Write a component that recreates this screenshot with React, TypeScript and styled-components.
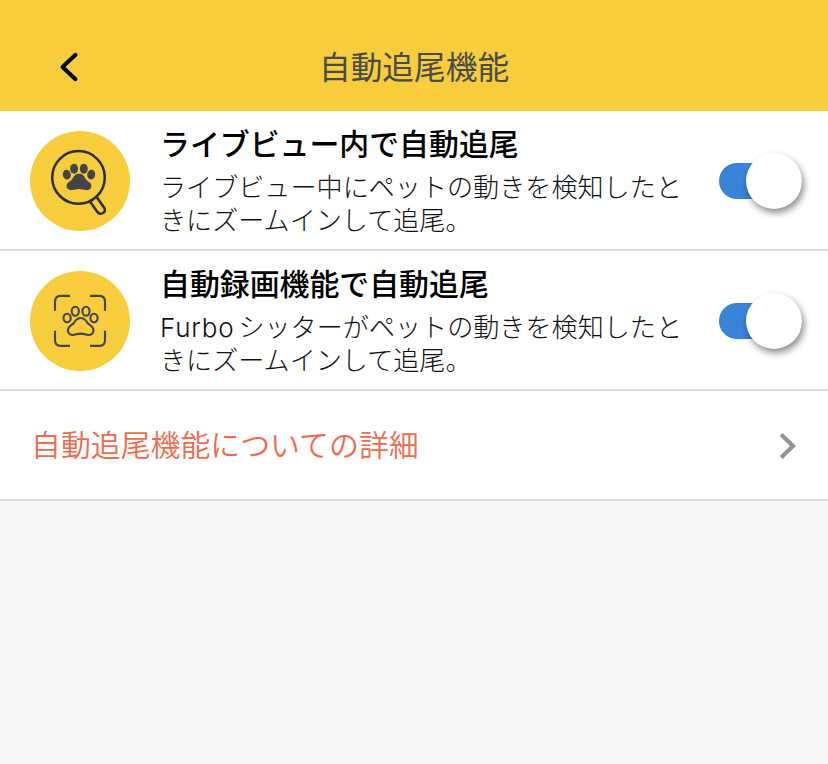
import React, { useState } from 'react';
import styled, { createGlobalStyle } from 'styled-components';

const GlobalStyle = createGlobalStyle`
  *, *::before, *::after { box-sizing: border-box; }
  body {
    margin: 0;
    background: #f6f6f6;
    font-family: "Noto Sans CJK JP", "Noto Sans", sans-serif;
  }
`;

const Screen = styled.div`
  width: 828px;
  height: 764px;
  overflow: hidden;
  background: #f6f6f6;
`;

const Header = styled.header`
  display: grid;
  grid-template-columns: 138px 1fr 138px;
  align-items: start;
  height: 111px;
  padding-top: 41px;
  background: #f7cd3d;
`;

const BackButton = styled.button`
  display: flex;
  width: 24px;
  height: 34px;
  margin: 9px 0 0 57px;
  padding: 0;
  border: 0;
  background: none;
`;

const HeaderTitle = styled.h1`
  margin: 0;
  color: #4a4a4a;
  font-size: 31.7px;
  font-weight: 400;
  line-height: 48px;
  text-align: center;
  white-space: nowrap;
`;

const SettingRow = styled.section`
  display: flex;
  height: 140px;
  padding: 0 26px 0 30px;
  border-bottom: 2px solid #dedede;
  background: #fff;
`;

const IconBadge = styled.div`
  flex: none;
  width: 100px;
  height: 100px;
  margin-top: 20px;
  border-radius: 50%;
  background: #f7cd3d;
`;

const SettingText = styled.div`
  flex: 1;
  margin-left: 30px;
  padding-top: 11px;
  color: #000;
  white-space: nowrap;
`;

const SettingTitle = styled.h2`
  margin: 0;
  font-size: 29.9px;
  font-weight: 500;
  line-height: 40px;
`;

const SettingDescription = styled.p`
  margin: 8px 0 0;
  color: #111;
  font-size: 26.1px;
  font-weight: 300;
  line-height: 33px;
`;

const Latin = styled.span`
  margin-right: 4px;
  font-family: Inter, sans-serif;
  font-size: 26px;
  line-height: 1;
  letter-spacing: 0.8px;
`;

const Switch = styled.button<{ $on: boolean }>`
  display: flex;
  flex: none;
  align-items: center;
  justify-content: ${({ $on }) => ($on ? 'flex-end' : 'flex-start')};
  width: 83px;
  height: 36px;
  margin-top: 52px;
  padding: 0;
  border: 0;
  border-radius: 18px;
  background: ${({ $on }) => ($on ? '#3983d8' : '#c4c4c4')};
`;

const Knob = styled.span`
  width: 56px;
  height: 56px;
  border-radius: 50%;
  background: #fff;
  box-shadow: 2px 4px 7px rgba(0, 0, 0, 0.45);
`;

const LinkRow = styled.a`
  display: flex;
  align-items: center;
  justify-content: space-between;
  height: 110px;
  padding: 2px 31px 0 31px;
  border-bottom: 2px solid #dedede;
  background: #fff;
  color: #ef6b4e;
  font-size: 29.9px;
  font-weight: 350;
  line-height: 44px;
  text-decoration: none;
  white-space: nowrap;
`;

const LinkLabel = styled.span`
  padding-bottom: 6px;
`;

const SearchPawIcon = () => (
  <svg width="100" height="100" viewBox="0 0 100 100" fill="none">
    <g stroke="#2c2f38" strokeWidth="2.5">
      <circle cx="48.5" cy="46.4" r="26.3" />
      <path d="M59.8 70.3 67.2 80.8C70.2 85 77.2 81.2 74.2 76.7L66.8 66.2" />
    </g>
    <g fill="#454547">
      <ellipse cx="36.8" cy="43.7" rx="4" ry="4.9" transform="rotate(-10 36.8 43.7)" />
      <ellipse cx="44.1" cy="37.7" rx="4" ry="5" />
      <ellipse cx="53.8" cy="37.7" rx="4" ry="5" />
      <ellipse cx="61.2" cy="43.7" rx="4" ry="4.9" transform="rotate(10 61.2 43.7)" />
      <path d="M49 42.7C44.8 42.7 43.6 45.4 42.3 48C41 50.5 36.6 51 36.6 55C36.6 58 39 59.4 42 59.1C44.7 58.8 46.2 58 49 58C51.8 58 53.3 58.8 56 59.1C59 59.4 61.4 58 61.4 55C61.4 51 57 50.5 55.7 48C54.4 45.4 53.2 42.7 49 42.7Z" />
    </g>
  </svg>
);

const FramedPawIcon = () => (
  <svg width="100" height="100" viewBox="0 0 100 100" fill="none" stroke="#424447" strokeWidth="2.1">
    <path d="M25 39.7V30.7Q25 24.9 30.8 24.9H40M60 24.9H69.3Q75 24.9 75 30.7V39.7M75 59.7V69Q75 74.9 69.3 74.9H60M40 74.9H30.8Q25 74.9 25 69V59.7" />
    <ellipse cx="37.1" cy="47" rx="3.6" ry="4.2" />
    <ellipse cx="45.3" cy="40.3" rx="3.6" ry="4.5" />
    <ellipse cx="56" cy="40.3" rx="3.6" ry="4.5" />
    <ellipse cx="64" cy="47" rx="3.6" ry="4.2" />
    <path d="M50.7 47C46.6 47 45.3 49.8 43.8 52C42.3 54 37.9 55 37.9 59.4C37.9 63 41 64.5 44.2 63.8C46.8 63.3 48 62.6 50.7 62.6C53.4 62.6 54.6 63.3 57.2 63.8C60.4 64.5 63.5 63 63.5 59.4C63.5 55 59.1 54 57.6 52C56.1 49.8 54.8 47 50.7 47Z" />
  </svg>
);

interface SettingProps {
  icon: React.ReactNode;
  title: string;
  children: React.ReactNode;
}

function Setting({ icon, title, children }: SettingProps) {
  const [on, setOn] = useState(true);
  return (
    <SettingRow>
      <IconBadge>{icon}</IconBadge>
      <SettingText>
        <SettingTitle>{title}</SettingTitle>
        <SettingDescription>{children}</SettingDescription>
      </SettingText>
      <Switch $on={on} role="switch" aria-checked={on} aria-label={title} onClick={() => setOn(!on)}>
        <Knob />
      </Switch>
    </SettingRow>
  );
}

export default function App() {
  return (
    <Screen lang="ja">
      <GlobalStyle />
      <Header>
        <BackButton aria-label="戻る">
          <svg width="24" height="34" viewBox="0 0 24 34" fill="none" stroke="#000" strokeWidth="4" strokeLinecap="round" strokeLinejoin="round">
            <path d="M18.5 4.8 5.5 17 18.5 29.2" />
          </svg>
        </BackButton>
        <HeaderTitle>自動追尾機能</HeaderTitle>
      </Header>
      <main>
        <Setting icon={<SearchPawIcon />} title="ライブビュー内で自動追尾">
          ライブビュー中にペットの動きを検知したと
          <br />
          きにズームインして追尾。
        </Setting>
        <Setting icon={<FramedPawIcon />} title="自動録画機能で自動追尾">
          <Latin>Furbo</Latin>シッターがペットの動きを検知したと
          <br />
          きにズームインして追尾。
        </Setting>
        <LinkRow href="#">
          <LinkLabel>自動追尾機能についての詳細</LinkLabel>
          <svg width="18" height="28" viewBox="0 0 18 28" fill="none" stroke="#929394" strokeWidth="4.2">
            <path d="M2.2 2.5 14 14 2.2 25.5" />
          </svg>
        </LinkRow>
      </main>
    </Screen>
  );
}
